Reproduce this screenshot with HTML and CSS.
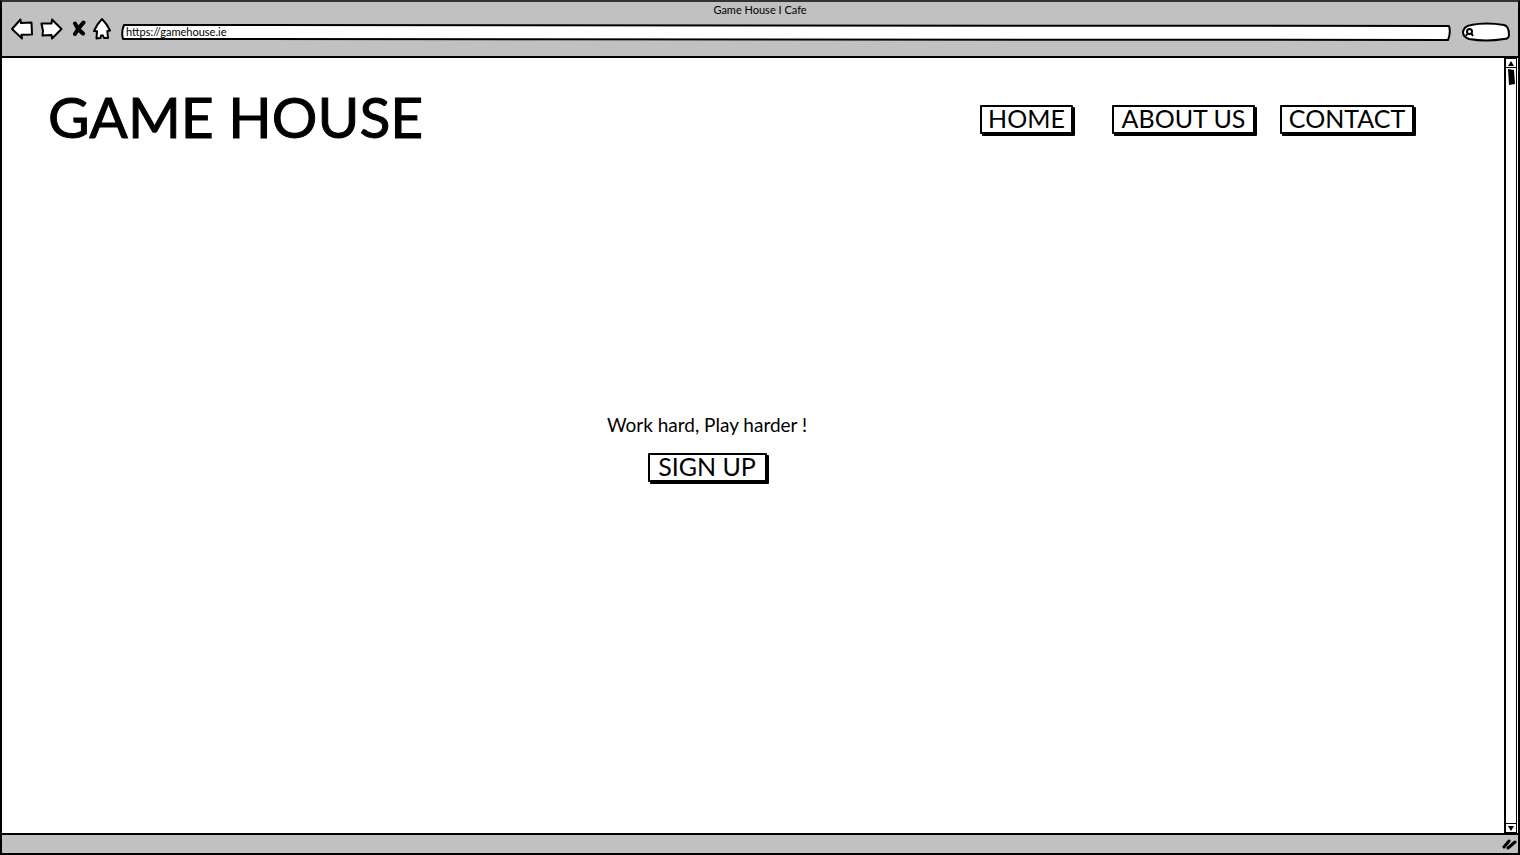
FILE: index.html
```html
<!DOCTYPE html>
<html lang="en">
<head>
<meta charset="utf-8">
<meta name="viewport" content="width=device-width, initial-scale=1">
<title>Game House I Cafe</title>
<link rel="stylesheet" href="styles.css">
</head>
<body>
<div class="browser">
  <div class="toolbar">
    <p class="window-title">Game House I Cafe</p>
    <div class="controls">
      <div class="history">
        <button type="button" class="tool" aria-label="Back"><svg width="24" height="24" viewBox="0 0 24 24"><path class="outline" d="M2 12 L10.500 2.500 L11 6 L21.500 5.500 L22 17.500 L11.500 17.800 L12 21.500 Z"/></svg></button>
        <button type="button" class="tool tool-forward" aria-label="Forward"><svg width="24" height="24" viewBox="0 0 24 24"><path class="outline" d="M2.500 6.500 L12.500 6.500 L13 2.500 L22.500 12 L13 21.500 L12.500 18 L3.500 18.500 L4 14 Z"/></svg></button>
        <button type="button" class="tool tool-stop" aria-label="Stop"><svg width="14" height="24" viewBox="0 0 14 24"><path class="cross" d="M3 6.500 Q6 13 11 16.500 M11.500 5.500 Q7 10 3 17"/></svg></button>
        <button type="button" class="tool" aria-label="Home page"><svg width="18" height="24" viewBox="0 0 18 24"><path class="outline" d="M9 2 Q14 7 17 13.500 L14.300 14 L15 21 L11 21 L10 18.500 L8 18.500 L7.500 21 L3.500 21.500 L4 14.300 L1 14 Q4 7 9 2 Z"/></svg></button>
      </div>
      <div class="address">
        <svg class="sketch" viewBox="0 0 1330 18" preserveAspectRatio="none" aria-hidden="true"><path class="outline" d="M3 1 Q500 2 1328 2 Q1330 9 1327 16 Q700 17 2 15 Q0 8 3 1 Z"/></svg>
        <input class="address-input" type="text" aria-label="Address" value="https://gamehouse.ie">
      </div>
      <div class="search">
        <svg class="sketch" viewBox="0 0 48 20" preserveAspectRatio="none" aria-hidden="true"><path class="outline" d="M9 3 Q24 0 42 3 Q47 4 47 13 Q47 17 42 17 Q24 20 7 17 Q1 15 1 10 Q2 4 9 3 Z"/><circle class="lens" cx="7.500" cy="9.500" r="2.500"/><path class="lens" d="M9 11 L11 14 M5 12 L4 14"/></svg>
        <input class="search-input" type="search" aria-label="Search">
      </div>
    </div>
  </div>
  <div class="viewport">
    <div class="page">
      <header class="site-header">
        <h1 class="brand">GAME HOUSE</h1>
        <nav class="nav">
          <a class="button home" href="#home">HOME</a>
          <a class="button about" href="#about">ABOUT US</a>
          <a class="button contact" href="#contact">CONTACT</a>
        </nav>
      </header>
      <main class="hero">
        <p class="tagline">Work hard, Play harder !</p>
        <button type="button" class="button signup">SIGN UP</button>
      </main>
    </div>
    <div class="scrollbar">
      <button type="button" class="scroll-step" aria-label="Scroll up"><svg width="10" height="7" viewBox="0 0 10 7"><path d="M5 1 L8 6 H2 Z"/></svg></button>
      <div class="track"><svg class="thumb" width="7" height="16" viewBox="0 0 7 16"><path d="M0 0 L6 1 L7 15 L1 16 Z"/></svg></div>
      <button type="button" class="scroll-step scroll-down" aria-label="Scroll down"><svg width="10" height="7" viewBox="0 0 10 7"><path d="M2 1 H8 L5 6 Z"/></svg></button>
    </div>
  </div>
  <div class="statusbar">
    <svg class="grip" width="16" height="12" viewBox="0 0 16 12" aria-hidden="true"><path d="M2 9 L7 3 M6 10 L13 4"/></svg>
  </div>
</div>
</body>
</html>
```
FILE: styles.css
```css
* {
  box-sizing: border-box;
}

body {
  margin: 0;
  background: #fff;
  color: #000;
  font-family: Lato, "Open Sans", sans-serif;
}

button {
  font: inherit;
  color: inherit;
  cursor: pointer;
}

.browser {
  display: flex;
  flex-direction: column;
  min-height: 100vh;
  border: 2px solid #000;
  border-top-color: #333;
}

.toolbar {
  padding-top: 1px;
  height: 56px;
  background: #c1c1c1;
  border-bottom: 2px solid #000;
}

.window-title {
  margin: 0;
  font-size: 11px;
  line-height: 14px;
  text-align: center;
}

.controls {
  display: flex;
  align-items: flex-start;
  padding: 0 8px;
}

.history {
  display: flex;
  align-items: center;
  margin-right: 10px;
}

.tool {
  display: flex;
  padding: 0;
  border: 0;
  background: none;
}

.tool-forward {
  margin-left: 5px;
}

.tool-stop {
  margin: 0 7px 0 9px;
}

.outline {
  fill: #fff;
  stroke: #000;
  stroke-width: 2;
  stroke-linejoin: round;
}

.cross {
  fill: none;
  stroke: #000;
  stroke-width: 4;
  stroke-linecap: round;
}

.address,
.search {
  position: relative;
  height: 18px;
  margin-top: 7px;
}

.address {
  flex: 1;
}

.search {
  width: 48px;
  height: 20px;
  margin-top: 5px;
  margin-left: 11px;
}

.sketch {
  position: absolute;
  inset: 0;
  width: 100%;
  height: 100%;
}

.lens {
  fill: none;
  stroke: #000;
  stroke-width: 2;
}

.address-input,
.search-input {
  position: relative;
  display: block;
  width: 100%;
  height: 16px;
  padding: 0 5px;
  border: 0;
  background: none;
  font-family: inherit;
  font-size: 11px;
  line-height: 16px;
  color: #000;
}

.search-input {
  padding-left: 14px;
}

.viewport {
  display: flex;
  flex: 1;
}

.page {
  flex: 1;
  padding: 24px 90px 24px 46px;
}

.site-header {
  display: flex;
  align-items: flex-start;
  justify-content: space-between;
}

.brand {
  margin: 0;
  font-size: 57px;
  line-height: 68px;
  font-weight: 400;
  -webkit-text-stroke: 1px #000;
}

.nav {
  display: flex;
  margin-top: 23px;
}

.button {
  display: flex;
  align-items: center;
  justify-content: center;
  height: 29px;
  padding: 0 0 3px;
  border: 2px solid #000;
  border-radius: 1px;
  background: #fff;
  box-shadow: 2px 2px 0 #000;
  color: #000;
  font-size: 25px;
  line-height: 24px;
  text-decoration: none;
}

.home {
  width: 93px;
  margin-right: 39px;
}

.about {
  width: 143px;
  margin-right: 25px;
}

.contact {
  width: 134px;
}

.hero {
  display: flex;
  flex-direction: column;
  align-items: center;
  padding-top: 263px;
  margin-right: 48px;
}

.tagline {
  margin: 0 0 16px;
  font-size: 19px;
  line-height: 24px;
}

.signup {
  width: 119px;
}

.scrollbar {
  display: flex;
  flex-direction: column;
  width: 13px;
  margin-right: 1px;
  border: 1px solid #000;
  border-left-width: 2px;
}

.scroll-step {
  display: flex;
  justify-content: center;
  padding: 1px 0 0;
  border: 0;
  border-bottom: 1px solid #000;
  background: #fff;
}

.scroll-down {
  border-top: 1px solid #000;
  border-bottom: 0;
}

.track {
  flex: 1;
  padding: 1px 2px;
}

.thumb {
  display: block;
}

.statusbar {
  display: flex;
  align-items: center;
  justify-content: flex-end;
  height: 20px;
  background: #c1c1c1;
  border-top: 2px solid #000;
}

.grip {
  fill: none;
  stroke: #000;
  stroke-width: 3;
  stroke-linecap: round;
}
```
